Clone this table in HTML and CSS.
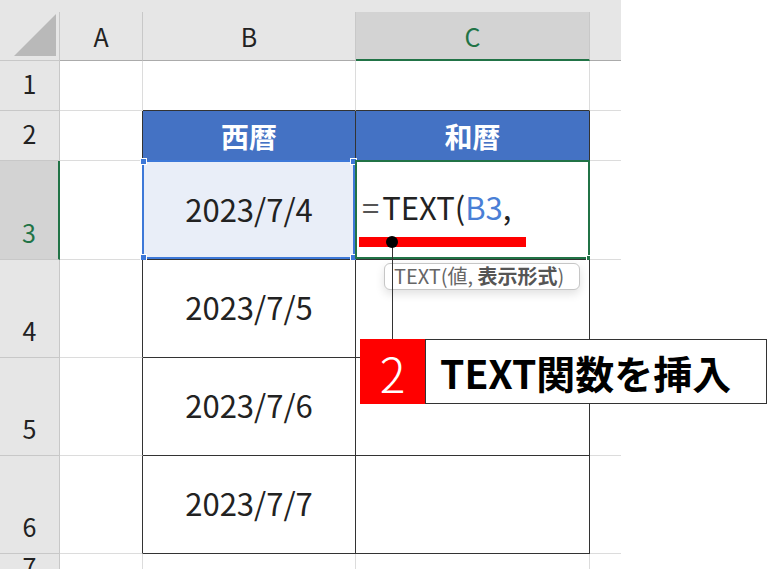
FILE: index.html
```html
<!DOCTYPE html>
<html lang="ja">
<head>
<meta charset="utf-8">
<link rel="stylesheet" href="styles.css">
</head>
<body>
<div class="sheet">
  <div class="topstrip"></div>
  <div class="grid">
    <div class="c h corner"><svg class="tri" width="42" height="42" viewBox="0 0 42 42"><polygon points="0,42 42,42 42,0" fill="#b9b9b9"/></svg></div>
    <div class="c h ch">A</div>
    <div class="c h ch">B</div>
    <div class="c h ch chsel">C</div>
    <div class="c h ch last"></div>

    <div class="c h rh">1</div>
    <div class="c"></div>
    <div class="c tbtop"></div>
    <div class="c tbtop"></div>
    <div class="c last"></div>

    <div class="c h rh">2</div>
    <div class="c tbleft"></div>
    <div class="c tb th">西暦</div>
    <div class="c tb th">和暦</div>
    <div class="c last"></div>

    <div class="c h rh rhsel">3</div>
    <div class="c tbleft"></div>
    <div class="c tb val selcell">2023/7/4<div class="selb"><span class="hd tl"></span><span class="hd tr"></span><span class="hd bl"></span><span class="hd br"></span></div></div>
    <div class="c tb formula"><span class="ftext"><span class="eq">=</span>TEXT(<span class="ref">B3</span>,</span><div class="actb"><span class="gh"></span></div></div>
    <div class="c last"></div>

    <div class="c h rh">4</div>
    <div class="c tbleft"></div>
    <div class="c tb val">2023/7/5</div>
    <div class="c tb"></div>
    <div class="c last"></div>

    <div class="c h rh">5</div>
    <div class="c tbleft"></div>
    <div class="c tb val">2023/7/6</div>
    <div class="c tb"></div>
    <div class="c last"></div>

    <div class="c h rh">6</div>
    <div class="c tbleft"></div>
    <div class="c tb val">2023/7/7</div>
    <div class="c tb"></div>
    <div class="c last"></div>

    <div class="c h rh">7</div>
    <div class="c"></div>
    <div class="c"></div>
    <div class="c"></div>
    <div class="c last"></div>
  </div>

  <div class="redbar"></div>
  <div class="tooltip">TEXT(値, <b>表示形式</b>)</div>
  <div class="leader"></div>
  <div class="dot"></div>
  <div class="callout">
    <div class="num">2</div>
    <div class="label">TEXT関数を挿入</div>
  </div>
</div>
</body>
</html>
```

FILE: styles.css
```css
* { box-sizing: border-box; }
html, body { margin: 0; padding: 0; background: #ffffff; }
body {
  width: 768px;
  height: 569px;
  overflow: hidden;
  font-family: "Noto Sans CJK JP", "Noto Sans", sans-serif;
  color: #222;
}
.sheet { position: relative; width: 768px; height: 569px; }
.topstrip {
  width: 621px;
  height: 12px;
  background: #e6e6e6;
}
.grid {
  display: grid;
  width: 621px;
  grid-template-columns: 60px 83px 213px 234px 31px;
  grid-template-rows: 49px 50px 50px 99px 98px 98px 98px 40px;
}
.c {
  position: relative;
  border-right: 1px solid #dcdcdc;
  border-bottom: 1px solid #dcdcdc;
  background: #ffffff;
}
.c.last { border-right: none; }
.h {
  background: #e6e6e6;
  border-right-color: #c8c8c8;
  border-bottom-color: #c8c8c8;
  color: #222;
}
.corner { display: flex; align-items: flex-end; justify-content: flex-end; padding: 0 3px 4px 0; }
.tri { display: block; }
.ch {
  display: flex;
  align-items: center;
  justify-content: center;
  font-size: 25px;
  border-bottom: 1px solid #ababab;
}
.chsel {
  background: #d3d3d3;
  color: #217346;
  border-bottom: 2px solid #217346;
}
.rh {
  display: flex;
  align-items: flex-end;
  justify-content: center;
  font-size: 25px;
  line-height: 1;
  padding-bottom: 14px;
}
.rhsel {
  background: #d3d3d3;
  color: #217346;
  border-right: 2px solid #217346;
}
.tbtop { border-bottom-color: #333; }
.tbleft { border-right-color: #333; }
.tb { border-right-color: #333; border-bottom-color: #333; }
.th {
  background: #4472c4;
  color: #ffffff;
  font-weight: bold;
  font-size: 28px;
  display: flex;
  align-items: center;
  justify-content: center;
}
.val {
  display: flex;
  align-items: center;
  justify-content: center;
  font-size: 31px;
  color: #222;
  padding-bottom: 4px;
}
.selcell { background: #e9eef8; }
.selb {
  position: absolute;
  left: -1px;
  top: -1px;
  right: 0;
  bottom: 0;
  border: 2px solid #3d78d8;
}
.hd {
  position: absolute;
  width: 7px;
  height: 7px;
  background: #3d78d8;
  border: 1px solid #ffffff;
}
.hd.tl { left: -4px; top: -4px; }
.hd.tr { right: -4px; top: -4px; }
.hd.bl { left: -4px; bottom: -4px; }
.hd.br { right: -4px; bottom: -4px; }
.formula {
  display: flex;
  align-items: center;
  padding-left: 6px;
  padding-bottom: 7px;
  font-size: 31px;
  color: #222;
  white-space: nowrap;
}
.eq { color: #555; margin-right: 3px; }
.ref { color: #4a7fd6; }
.actb {
  position: absolute;
  left: -1px;
  top: -1px;
  right: -1px;
  bottom: 0;
  border: 2px solid #217346;
}
.gh {
  position: absolute;
  right: -4px;
  bottom: -4px;
  width: 6px;
  height: 6px;
  background: #217346;
  border: 1px solid #fff;
}
.redbar {
  position: absolute;
  left: 359px;
  top: 237px;
  width: 167px;
  height: 10px;
  background: #ff0000;
}
.tooltip {
  position: absolute;
  left: 384px;
  top: 263px;
  width: 196px;
  height: 27px;
  border: 1px solid #c6c6c6;
  border-radius: 6px;
  background: #ffffff;
  box-shadow: 0 4px 10px rgba(0,0,0,0.12);
  font-size: 20px;
  line-height: 24px;
  padding-left: 9px;
  color: #666;
  white-space: nowrap;
}
.tooltip b { color: #555; }
.leader {
  position: absolute;
  left: 392px;
  top: 242px;
  width: 1px;
  height: 98px;
  background: #333;
}
.dot {
  position: absolute;
  left: 386px;
  top: 236px;
  width: 12px;
  height: 12px;
  border-radius: 50%;
  background: #000;
}
.callout {
  position: absolute;
  left: 360px;
  top: 339px;
  display: flex;
  height: 65px;
}
.num {
  width: 65px;
  height: 65px;
  background: #ff0000;
  color: #ffffff;
  font-size: 48px;
  font-weight: 300;
  display: flex;
  align-items: center;
  justify-content: center;
}
.label {
  width: 342px;
  height: 65px;
  background: #ffffff;
  border: 1.5px solid #333;
  font-size: 39px;
  font-weight: bold;
  color: #000;
  display: flex;
  align-items: center;
  padding-left: 14px;
  white-space: nowrap;
}
```
